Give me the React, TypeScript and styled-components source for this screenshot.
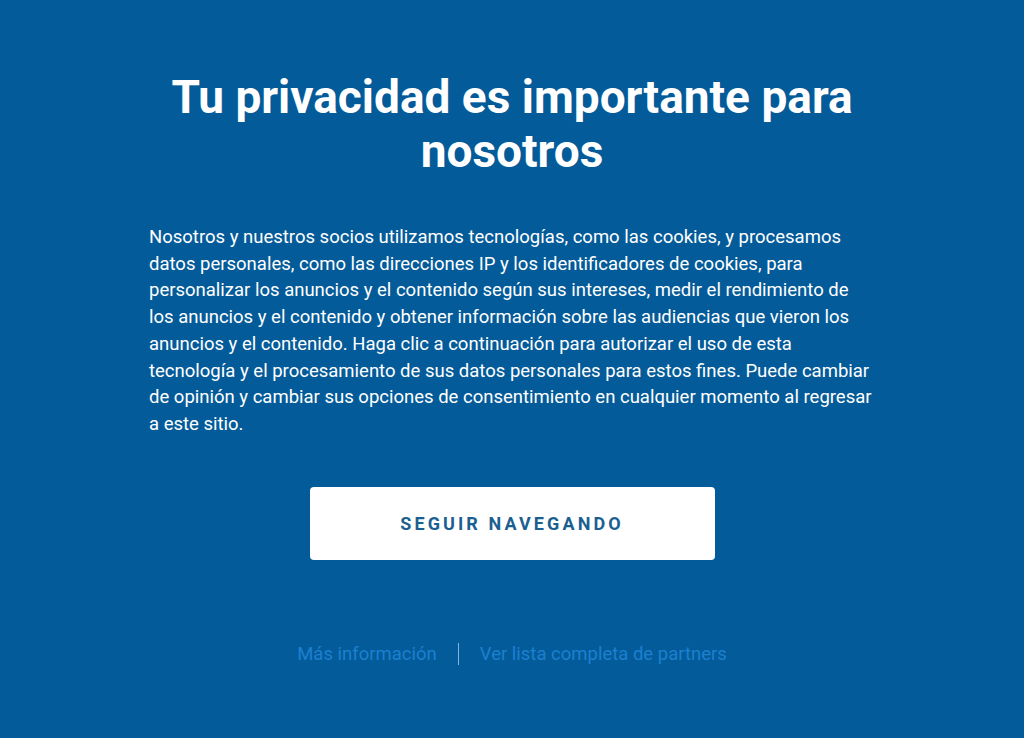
import styled, { createGlobalStyle } from "styled-components";

const GlobalStyle = createGlobalStyle`
  html, body {
    margin: 0;
    padding: 0;
    background-color: #045b99;
  }
  body {
    font-family: Roboto, "Liberation Sans", sans-serif;
  }
`;

const Page = styled.div`
  width: 100vw;
  height: 100vh;
  background-color: #045b99;
  display: flex;
  justify-content: center;
  box-sizing: border-box;
  padding-top: 70px;
`;

const Panel = styled.div`
  width: 726px;
  display: flex;
  flex-direction: column;
  align-items: center;
`;

const Title = styled.h1`
  margin: 0;
  color: #ffffff;
  font-size: 46px;
  line-height: 54px;
  font-weight: 700;
  text-align: center;
  width: 720px;
`;

const Body = styled.p`
  margin: 46px 0 0 0;
  color: #ffffff;
  font-size: 18.5px;
  line-height: 26.7px;
  text-align: left;
  width: 100%;
`;

const AcceptButton = styled.button`
  margin-top: 49px;
  width: 405px;
  height: 73px;
  border: none;
  border-radius: 4px;
  background-color: #ffffff;
  color: #1b5f91;
  font-family: Roboto, "Liberation Sans", sans-serif;
  font-size: 18px;
  font-weight: 700;
  letter-spacing: 3.1px;
  cursor: pointer;
`;

const Links = styled.div`
  margin-top: 83px;
  display: flex;
  align-items: center;
  gap: 21px;
`;

const Link = styled.a`
  color: #1b80d0;
  font-size: 18.5px;
  text-decoration: none;
  cursor: pointer;
`;

const Divider = styled.span`
  width: 1px;
  height: 22px;
  background-color: #80b5e0;
`;

export default function App() {
  return (
    <>
      <GlobalStyle />
      <Page>
        <Panel>
          <Title>Tu privacidad es importante para nosotros</Title>
          <Body>
            Nosotros y nuestros socios utilizamos tecnologías, como las cookies, y procesamos
            datos personales, como las direcciones IP y los identificadores de cookies, para
            personalizar los anuncios y el contenido según sus intereses, medir el rendimiento de
            los anuncios y el contenido y obtener información sobre las audiencias que vieron los
            anuncios y el contenido. Haga clic a continuación para autorizar el uso de esta
            tecnología y el procesamiento de sus datos personales para estos fines. Puede cambiar
            de opinión y cambiar sus opciones de consentimiento en cualquier momento al regresar
            a este sitio.
          </Body>
          <AcceptButton>SEGUIR NAVEGANDO</AcceptButton>
          <Links>
            <Link>Más información</Link>
            <Divider />
            <Link>Ver lista completa de partners</Link>
          </Links>
        </Panel>
      </Page>
    </>
  );
}
